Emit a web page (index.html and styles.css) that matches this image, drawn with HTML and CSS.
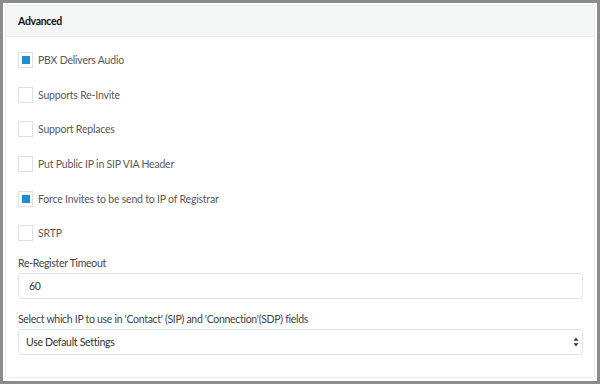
FILE: index.html
```html
<!DOCTYPE html>
<html lang="en">
<head>
  <meta charset="UTF-8">
  <title>Advanced</title>
  <link rel="stylesheet" href="styles.css">
</head>
<body>
  <div class="frame">
    <div class="panel">
      <div class="panel-heading">Advanced</div>
      <div class="panel-body">
        <label class="check"><span class="box checked"></span>PBX Delivers Audio</label>
        <label class="check"><span class="box"></span>Supports Re-Invite</label>
        <label class="check"><span class="box"></span>Support Replaces</label>
        <label class="check"><span class="box"></span>Put Public IP in SIP VIA Header</label>
        <label class="check"><span class="box checked"></span>Force Invites to be send to IP of Registrar</label>
        <label class="check"><span class="box"></span>SRTP</label>

        <div class="field">
          <div class="field-label">Re-Register Timeout</div>
          <div class="input">60</div>
        </div>

        <div class="field">
          <div class="field-label">Select which IP to use in 'Contact' (SIP) and 'Connection'(SDP) fields</div>
          <div class="input select">
            <span>Use Default Settings</span>
            <svg width="6" height="10" viewBox="0 0 6 10">
              <path d="M3 0.5 L5.5 3.8 L0.5 3.8 Z" fill="#333"/>
              <path d="M3 9.5 L5.5 6.2 L0.5 6.2 Z" fill="#333"/>
            </svg>
          </div>
        </div>
      </div>
    </div>
  </div>
</body>
</html>
```

FILE: styles.css
```css
* {
  box-sizing: border-box;
  margin: 0;
  padding: 0;
}

body {
  width: 600px;
  height: 384px;
  font-family: Lato, 'Open Sans', sans-serif;
  font-size: 10.5px;
  letter-spacing: -0.3px;
  color: #5a5a5a;
  background: #fff;
}

.frame {
  height: 384px;
  border: 3px solid #8c8c8c;
  padding: 2px 2px 3px 2px;
  background: #fff;
}

.panel {
  height: 100%;
  border: 1px solid #e6ebeb;
  border-radius: 2px;
}

.panel-heading {
  height: 31px;
  background: #f5f7f7;
  border-bottom: 1px solid #e9eded;
  padding: 0 12px;
  display: flex;
  align-items: center;
  font-weight: 700;
  color: #111;
}

.panel-body {
  padding: 6px 11px 0 12px;
}

.check {
  display: flex;
  align-items: center;
  height: 34.6px;
  letter-spacing: -0.2px;
}

.box {
  width: 15px;
  height: 16px;
  border: 1px solid #dde3e3;
  margin-right: 5px;
  display: flex;
  align-items: center;
  justify-content: center;
}

.box.checked::after {
  content: '';
  width: 8px;
  height: 8px;
  background: #1c8fd3;
}

.field {
  margin-top: 6px;
}

.field + .field {
  margin-top: 14px;
}

.field-label {
  color: #444;
  margin-bottom: 4px;
}

.input {
  height: 26px;
  border: 1px solid #e1e6e6;
  border-radius: 3px;
  padding: 0 10px;
  display: flex;
  align-items: center;
  color: #333;
}

.select {
  justify-content: space-between;
  padding: 0 3px 0 7px;
}
```
